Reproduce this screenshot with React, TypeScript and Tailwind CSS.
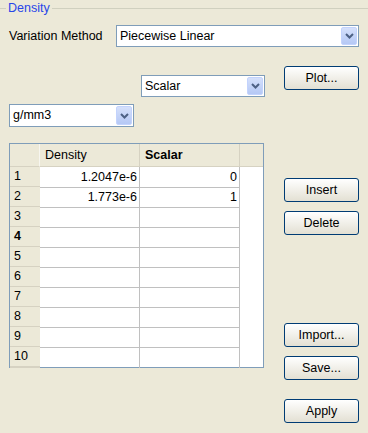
import React from "react";

const font = { fontFamily: '"Liberation Sans", Arial, sans-serif' };

function Chevron() {
  return (
    <svg width="9" height="6" viewBox="0 0 9 6">
      <path d="M1 1 L4.5 4.5 L8 1" fill="none" stroke="#4d6185" strokeWidth="2" />
    </svg>
  );
}

function Combo({ value, className }: { value: string; className: string }) {
  return (
    <div className={`flex items-center border border-[#7f9db9] bg-white ${className}`}>
      <span className="flex-1 truncate pl-[3px] text-[12.5px] text-black">{value}</span>
      <div className="m-px flex h-[calc(100%-2px)] w-[16px] items-center justify-center rounded-[2px] border border-[#c3d3fd] bg-gradient-to-b from-[#d5e0fb] to-[#b5c8f5]">
        <Chevron />
      </div>
    </div>
  );
}

function Btn({ label, className = "" }: { label: string; className?: string }) {
  return (
    <button
      className={`flex h-[24px] w-[75px] items-center justify-center rounded-[3px] border border-[#003c74] bg-gradient-to-b from-white to-[#e3e0d3] text-[12.5px] text-black ${className}`}
    >
      {label}
    </button>
  );
}

const rows = [
  { d: "1.2047e-6", s: "0" },
  { d: "1.773e-6", s: "1" },
  ...Array.from({ length: 8 }, () => ({ d: "", s: "" })),
];

export default function App() {
  return (
    <div className="relative h-[433px] w-[368px] overflow-hidden bg-[#ece9d8] text-black" style={font}>
      {/* group box title */}
      <div className="flex items-center pt-px">
        <div className="h-px w-[6px] bg-[#d0d0bf]" />
        <span className="px-[2px] text-[12.5px] leading-[15px] text-[#2846e8]">Density</span>
        <div className="h-px flex-1 bg-[#d0d0bf]" />
      </div>

      <div className="pl-[9px]">
        <div className="mt-[9px] flex items-center">
          <span className="w-[107px] text-[12.5px]">Variation Method</span>
          <Combo value="Piecewise Linear" className="h-[22px] w-[243px]" />
        </div>

        <div className="mt-[19px] flex items-start">
          <Combo value="Scalar" className="ml-[132px] mt-[9px] h-[22px] w-[124px]" />
          <Btn label="Plot..." className="ml-[19px]" />
        </div>

        <Combo value="g/mm3" className="mt-[7px] h-[23px] w-[125px]" />

        <div className="mt-[16px] flex items-start">
          <div className="w-[255px] border border-[#7f9db9] bg-white text-[12.5px]">
            <div className="grid h-[23px] grid-cols-[30px_100px_100px_23px] bg-[#ece9d8]">
              <div className="border-b border-r border-[#d6d2c2] border-r-[#f7f6f0]" />
              <div className="flex items-center border-b border-r border-[#d6d2c2] pl-[5px]">Density</div>
              <div className="flex items-center border-b border-r border-[#d6d2c2] pl-[5px] font-bold">Scalar</div>
              <div className="border-b border-[#d6d2c2]" />
            </div>
            {rows.map((r, i) => (
              <div key={i} className="grid h-[20px] grid-cols-[30px_100px_100px_23px]">
                <div
                  className={`flex items-center border-b-2 border-[#d6d2c2] bg-[#ece9d8] pl-[4px] ${i === 3 ? "font-bold" : ""}`}
                >
                  {i + 1}
                </div>
                <div className={`flex items-center justify-end border-r border-[#c0c0c0] pr-[2px] ${i < 9 ? "border-b" : ""}`}>
                  {r.d}
                </div>
                <div className={`flex items-center justify-end border-r border-[#c0c0c0] pr-[2px] ${i < 9 ? "border-b" : ""}`}>
                  {r.s}
                </div>
                <div />
              </div>
            ))}
          </div>

          <div className="ml-[20px] flex flex-col">
            <Btn label="Insert" className="mt-[35px]" />
            <Btn label="Delete" className="mt-[9px]" />
            <Btn label="Import..." className="mt-[88px]" />
            <Btn label="Save..." className="mt-[9px]" />
            <Btn label="Apply" className="mt-[19px]" />
          </div>
        </div>
      </div>
    </div>
  );
}
